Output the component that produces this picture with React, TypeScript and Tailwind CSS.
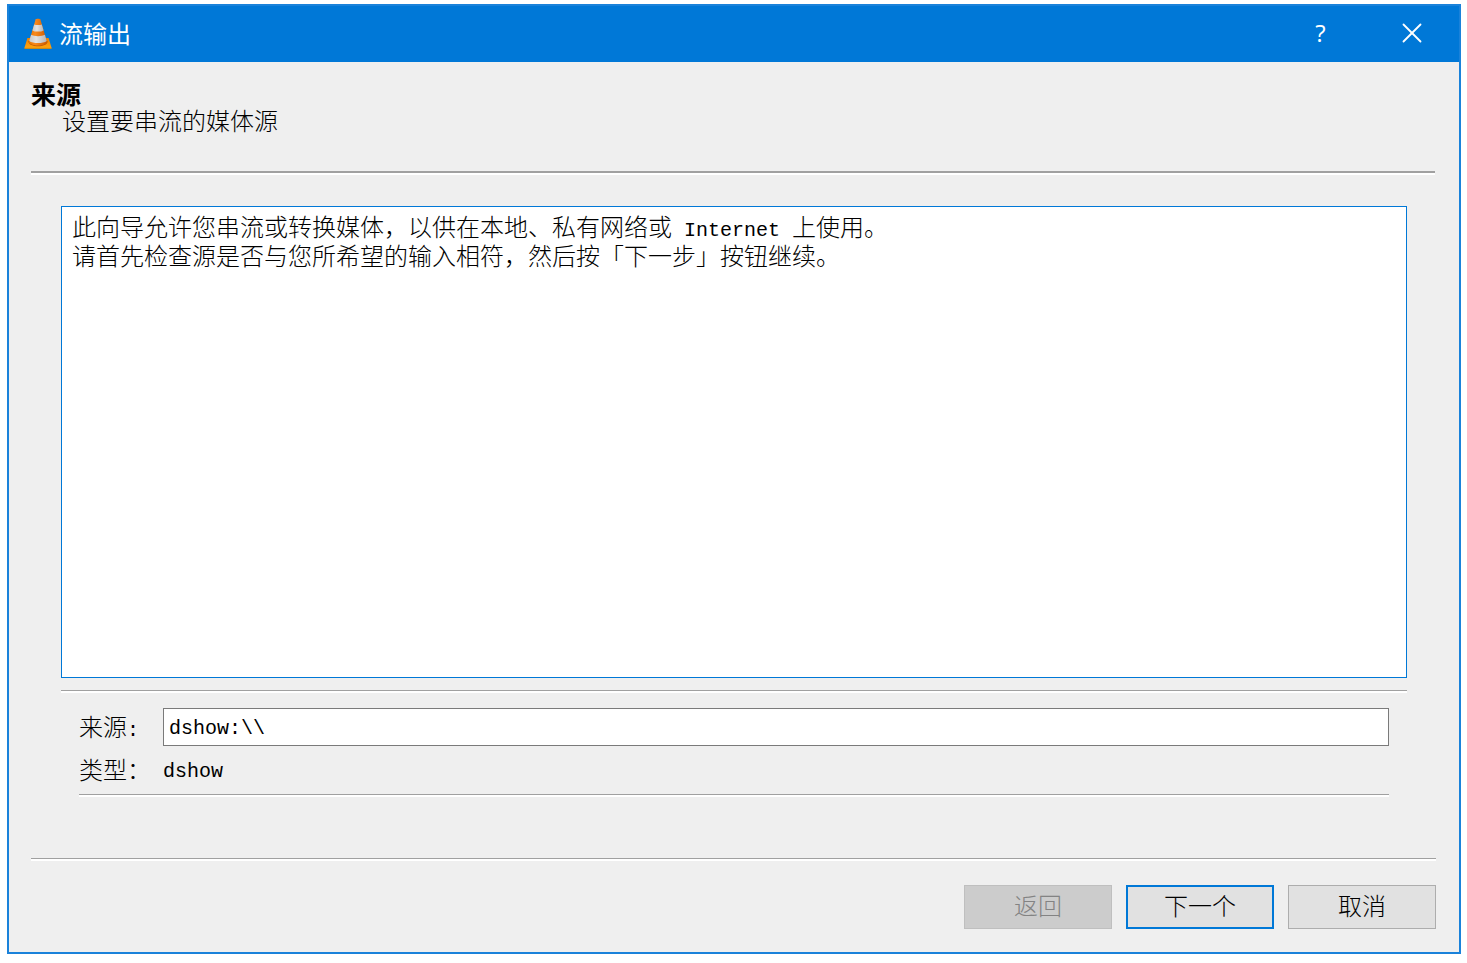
import { X } from 'lucide-react'
import { clsx } from 'clsx'

function ConeIcon() {
  return (
    <svg className="h-8 w-7 shrink-0" viewBox="0 0 28 32" aria-hidden="true">
      <defs>
        <linearGradient id="cone-orange" x1="0" x2="1" y1="0" y2="0">
          <stop offset="0" stopColor="#e87400" />
          <stop offset="0.35" stopColor="#f98a1c" />
          <stop offset="1" stopColor="#c95800" />
        </linearGradient>
        <linearGradient id="cone-white" x1="0" x2="1" y1="0" y2="0">
          <stop offset="0" stopColor="#c8c8c8" />
          <stop offset="0.4" stopColor="#e2e2e2" />
          <stop offset="1" stopColor="#b4b4b4" />
        </linearGradient>
        <linearGradient id="cone-base" x1="0" x2="0" y1="0" y2="1">
          <stop offset="0" stopColor="#f08000" />
          <stop offset="1" stopColor="#ffa510" />
        </linearGradient>
      </defs>
      <path d="M3.4 21H24.6L27.6 31H0.4Z" fill="url(#cone-base)" />
      <path d="M0.4 30.8H27.6V32H0.4Z" fill="#c98a1a" />
      <path d="M4.4 24.5C4.4 30.8 23.6 30.8 23.6 24.5L21 21H7Z" fill="#c05a00" />
      <path d="M11.6 2.4C12 1.4 16 1.4 16.4 2.4L23.2 25.6C20.6 29.6 7.4 29.6 4.8 25.6Z" fill="url(#cone-orange)" />
      <path d="M10.2 7.4C12.3 8.2 15.7 8.2 17.8 7.4L19.6 13.4C17 15 11 15 8.4 13.4Z" fill="url(#cone-white)" />
      <path d="M7.1 17.8C10 19.6 18 19.6 20.9 17.8L22.8 24C19 26.8 9 26.8 5.2 24Z" fill="url(#cone-white)" />
    </svg>
  )
}

function Divider({ thick = false }: { thick?: boolean }) {
  return (
    <hr
      className={clsx(
        'border-b-2 border-t-[#a0a0a0] border-b-white',
        thick ? 'border-t-2' : 'border-t',
      )}
    />
  )
}

const latin = "font-['Liberation_Mono',monospace] text-xl font-normal"
const buttonBase = 'h-11 w-[148px] pb-1 text-2xl font-light'

export default function App() {
  return (
    <div className="h-screen min-h-[600px] bg-white pt-1 pr-1.5 pb-[9px] pl-[7px] font-['Noto_Sans_CJK_SC',sans-serif] text-2xl font-light text-black">
      <div className="flex h-full flex-col border-2 border-[#1a82da] bg-[#efefef]">
        {/* Title bar */}
        <header className="flex h-14 shrink-0 items-center bg-[#0078d7] pr-0.5 pb-0.5 pl-[15px] text-white">
          <ConeIcon />
          <h1 className="ml-[7px] flex-1 text-2xl font-normal">流输出</h1>
          <button type="button" aria-label="帮助" className="h-full w-[91px] font-['Open_Sans',sans-serif] text-2xl font-normal">
            ?
          </button>
          <button type="button" aria-label="关闭" className="flex h-full w-[91px] items-center justify-center">
            <X size={34} strokeWidth={1.3} />
          </button>
        </header>

        <main className="flex flex-1 flex-col pr-6 pl-[22px]">
          {/* Page heading */}
          <div className="pt-[18px] pb-[38px]">
            <h2 className="text-[25px] leading-[27px] font-bold">来源</h2>
            <p className="pl-[31px] leading-[26px]">设置要串流的媒体源</p>
          </div>
          <Divider thick />

          <section className="flex flex-1 flex-col pt-[31px] pr-7 pl-[30px]">
            <div className="mb-3 flex-1 border border-[#0078d7] bg-white px-2.5 py-[5px] leading-7">
              <p>
                此向导允许您串流或转换媒体，以供在本地、私有网络或
                <span className={clsx(latin, 'leading-none whitespace-pre')}> Internet </span>
                上使用。
              </p>
              <p>请首先检查源是否与您所希望的输入相符，然后按「下一步」按钮继续。</p>
            </div>
            <Divider />

            <div className="px-[18px] pt-[15px]">
              <div className="mb-2 grid grid-cols-[84px_1fr] items-center gap-y-2">
                <label htmlFor="source" className="pb-0.5">
                  来源<span className={clsx(latin, 'leading-none')}>:</span>
                </label>
                <input
                  id="source"
                  type="text"
                  defaultValue={'dshow:\\\\'}
                  className={clsx(latin, 'h-[38px] w-full border border-[#7a7a7a] bg-white px-[5px] pt-0.5 outline-none')}
                />
                <span className="pb-0.5 leading-[30px]">类型：</span>
                <span className={clsx(latin, 'pt-1 leading-7')}>dshow</span>
              </div>
              <Divider />
            </div>
          </section>
        </main>

        {/* Wizard buttons */}
        <footer className="pt-[61px] pr-[23px] pb-[23px] pl-[22px]">
          <Divider />
          <div className="flex justify-end gap-3.5 pt-6">
            <button type="button" disabled className={clsx(buttonBase, 'border border-[#bfbfbf] bg-[#cccccc] text-[#838383]')}>
              返回
            </button>
            <button type="button" className={clsx(buttonBase, 'border-2 border-[#0078d7] bg-[#e1e1e1]')}>
              下一个
            </button>
            <button type="button" className={clsx(buttonBase, 'border border-[#adadad] bg-[#e1e1e1]')}>
              取消
            </button>
          </div>
        </footer>
      </div>
    </div>
  )
}
